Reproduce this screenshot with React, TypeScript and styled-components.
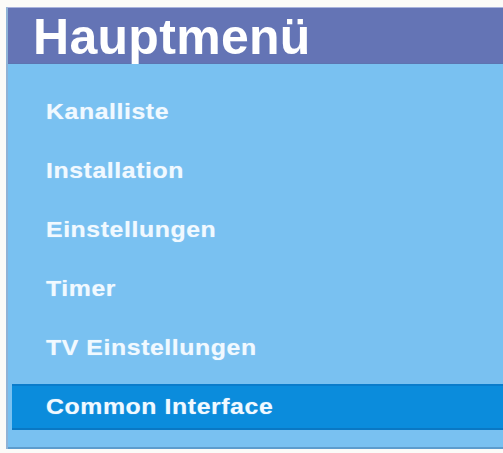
import React from 'react';
import styled, { createGlobalStyle } from 'styled-components';

const GlobalStyle = createGlobalStyle`
  html, body {
    margin: 0;
    padding: 0;
    background: #fbfbf8;
  }
  body {
    font-family: "Liberation Sans", Arial, sans-serif;
  }
`;

const items = [
    'Kanalliste',
    'Installation',
    'Einstellungen',
    'Timer',
    'TV Einstellungen',
    'Common Interface',
];

function App() {
    const selected = 5;
    return (
        <>
            <GlobalStyle />
            <Panel>
                <Header>Hauptmenü</Header>
                <Body>
                    {items.map((label, i) => (
                        <Row key={label} $active={i === selected}>
                            <Label>{label}</Label>
                        </Row>
                    ))}
                </Body>
            </Panel>
        </>
    );
}

const Panel = styled.div`
  margin: 7px 0 0 6px;
  display: flex;
  flex-direction: column;
  border-left: 2px solid #8fb3d6;
  border-top: 1px solid #a9b3dc;
`;

const Header = styled.div`
  height: 56px;
  box-sizing: border-box;
  padding: 3px 0 0 25px;
  background: #6474b5;
  color: #ffffff;
  font-size: 50px;
  font-weight: 700;
  line-height: 53px;
  letter-spacing: 0.3px;
  border-bottom: 1px solid #5d74b0;
`;

const Body = styled.div`
  display: flex;
  flex-direction: column;
  gap: 13px;
  padding: 25px 0 17px 0;
  background: #79c1f1;
  border-bottom: 2px solid #5c9ccd;
`;

const Row = styled.div<{ $active?: boolean }>`
  height: 46px;
  box-sizing: border-box;
  margin-left: 4px;
  padding-left: 34px;
  line-height: 41px;
  background: ${(p) => (p.$active ? '#0b8cdc' : 'transparent')};
  border-top: 2px solid ${(p) => (p.$active ? '#0a7ccb' : 'transparent')};
  border-bottom: 2px solid ${(p) => (p.$active ? '#0a78c4' : 'transparent')};
`;

const Label = styled.span`
  display: inline-block;
  font-size: 22px;
  font-weight: 700;
  letter-spacing: 0.5px;
  color: #f1f9ff;
  text-shadow: 0 0 1px rgba(255, 255, 255, 0.5);
  transform: scaleX(1.13);
  transform-origin: left center;
`;

export default App;
